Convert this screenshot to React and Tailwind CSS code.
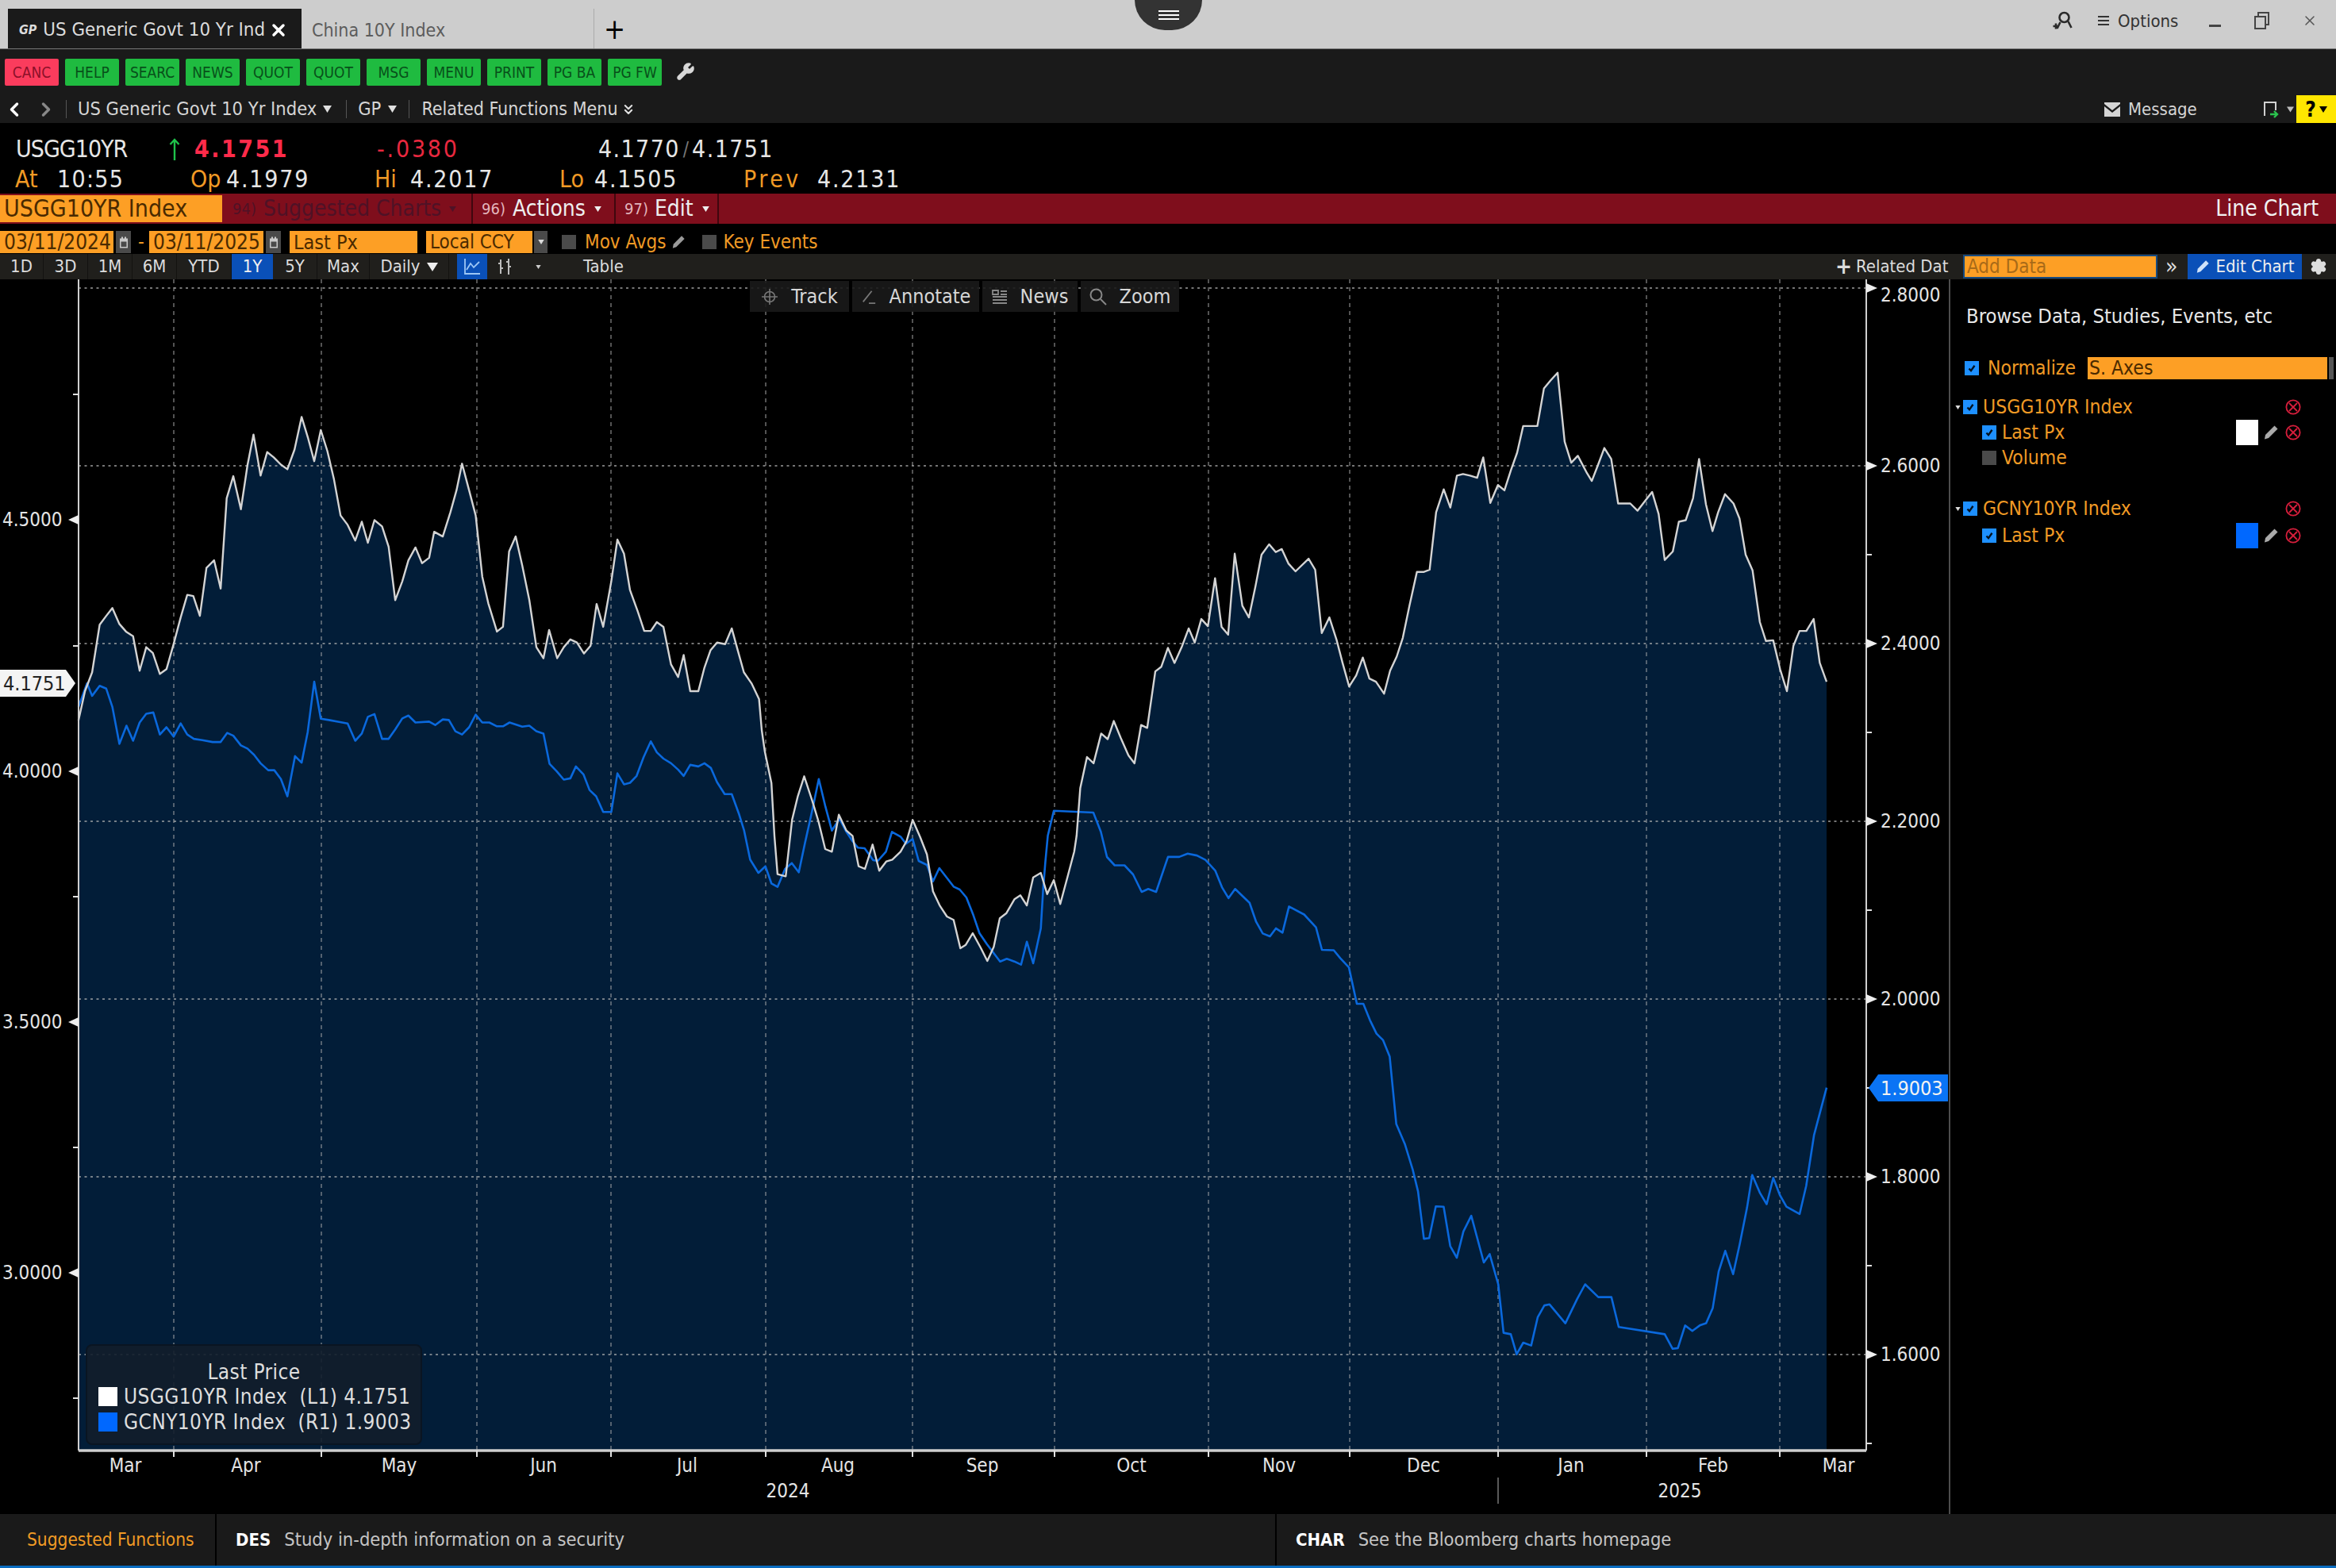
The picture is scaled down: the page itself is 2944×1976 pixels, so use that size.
import React from "react";
import { ChevronLeft, ChevronRight, ChevronsDown, Settings, Wrench, X } from "lucide-react";

// points were read off the zoomed crops, so each block keeps its own crop origin and scale
const crop = (pts, ox, oy, sx, sy) => pts.map(([x, y]) => [ox + x / sx, oy + y / sy]);

const white = [
  ...crop([[155,1183],[168,1090],[182,1030],[197,878],[210,850],[222,825],[236,876],[249,900],[263,915],[276,1025],[289,950],[302,968],[316,1035],[329,1020],[343,940],[357,855],[370,783],[382,787],[395,850],[408,697],[423,673],[436,763],[448,475],[461,405],[476,510],[489,370],[501,272],[515,403],[528,328],[541,345],[555,368],[568,383],[582,320],[596,216],[609,285],[621,357],[634,258],[647,325],[660,415],[673,530],[687,560],[702,610],[715,550],[727,617],[740,545],[755,565],[768,630],[781,800],[795,740],[807,673],[821,632],[834,682],[848,665],[858,582],[875,597],[890,520],[902,450],[913,365],[927,450],[940,530],[953,725],[965,810],[982,900],[994,885],[1006,645],[1019,597],[1032,690],[1046,800],[1060,950],[1074,985],[1085,895],[1101,985],[1114,950],[1127,925],[1140,935],[1154,970],[1167,945],[1179,812],[1192,885],[1208,740],[1220,607],[1233,652],[1245,768],[1260,835],[1273,898],[1286,898],[1298,870],[1311,885],[1326,1005],[1340,1045],[1351,975],[1364,1090],[1380,1090],[1392,1015],[1404,960],[1417,935],[1433,940],[1446,890],[1458,960],[1470,1030],[1485,1065],[1500,1115]], 0, 440, 1.568, 2.529),
  ...crop([[418,0],[428,80],[450,200],[460,400],[470,545],[497,553],[518,340],[537,250],[558,175],[585,270],[605,345],[627,450],[649,460],[672,320],[697,380],[717,400],[737,515],[758,525],[783,433],[805,532],[828,497],[848,490],[875,460],[895,420],[915,340],[940,405],[962,470],[982,610],[1005,665],[1028,705],[1050,718],[1072,825],[1090,812],[1113,768],[1140,825],[1161,873],[1182,820],[1202,712],[1224,692],[1250,640],[1270,625],[1291,663],[1312,557],[1337,540],[1358,620],[1380,567],[1401,658],[1425,555],[1447,460],[1455,400],[1467,220]], 800, 920, 2.613, 3),
  ...crop([[580,1300],[593,1320],[608,1225],[621,1243],[633,1185],[647,1240],[662,1295],[674,1320],[687,1198],[699,1207],[715,1027],[727,1012],[740,952],[753,1000],[767,950],[781,890],[793,935],[806,860],[819,883],[833,730],[846,885],[859,910],[872,652],[887,818],[900,855],[913,755],[925,655],[940,622],[953,647],[965,637],[978,683],[992,708],[1018,668],[1031,703],[1044,905],[1059,855],[1073,925],[1085,1000],[1098,1075],[1112,1040],[1125,983],[1138,1050],[1151,1060],[1167,1098],[1179,1025],[1192,980],[1204,920],[1217,820],[1232,710],[1246,710],[1257,703],[1270,520],[1285,447],[1298,505],[1311,403],[1323,398],[1337,403],[1351,410],[1363,345],[1377,490],[1392,433],[1405,450],[1418,385],[1430,330],[1442,245],[1470,245],[1483,125],[1496,100],[1510,75],[1524,295],[1537,362],[1550,340],[1568,395]], 1000, 440, 1.568, 2.529),
  ...crop([[600,420],[615,370],[631,315],[648,350],[665,492],[695,492],[713,515],[735,478],[749,455],[765,525],[780,672],[800,645],[815,550],[832,545],[850,475],[865,350],[882,495],[898,580],[912,520],[929,462],[950,492],[965,540],[980,655],[997,705],[1015,870],[1030,930],[1048,928],[1065,1020],[1082,1090],[1098,945],[1113,898],[1130,898],[1148,860],[1163,1000],[1180,1060]], 1700, 440, 1.96, 2.529),
];

const blue = [
  ...crop([[155,1140],[172,1065],[182,1105],[197,1073],[210,1082],[222,1140],[236,1258],[250,1200],[263,1248],[276,1190],[289,1162],[303,1158],[316,1228],[329,1205],[343,1235],[357,1193],[370,1228],[383,1242],[400,1246],[420,1252],[436,1252],[449,1223],[461,1232],[476,1263],[489,1273],[502,1293],[515,1320],[530,1342],[542,1342],[555,1370],[568,1425],[583,1297],[596,1318],[608,1220],[621,1060],[634,1178],[650,1182],[670,1188],[687,1193],[702,1248],[715,1225],[727,1172],[740,1163],[755,1242],[768,1242],[781,1212],[795,1177],[807,1168],[821,1190],[848,1187],[860,1198],[875,1180],[887,1182],[900,1218],[913,1228],[927,1205],[940,1165],[953,1190],[967,1190],[982,1202],[994,1202],[1007,1190],[1032,1203],[1046,1200],[1060,1218],[1074,1225],[1086,1322],[1100,1345],[1114,1372],[1127,1368],[1138,1330],[1153,1355],[1165,1405],[1178,1425],[1192,1475],[1208,1475],[1220,1352],[1233,1387],[1245,1382],[1258,1360],[1272,1300],[1286,1250],[1298,1285],[1311,1305],[1326,1320],[1340,1340],[1351,1360],[1364,1325],[1380,1330],[1392,1320],[1405,1335],[1417,1380],[1432,1418],[1446,1418],[1460,1480]], 0, 440, 1.568, 2.529),
  ...crop([[360,380],[380,490],[407,540],[430,515],[450,580],[470,593],[495,525],[517,503],[540,538],[560,430],[585,300],[606,185],[628,290],[649,380],[674,335],[697,385],[717,420],[735,445],[757,447],[785,492],[800,495],[827,460],[847,385],[875,403],[893,430],[915,412],[935,495],[962,510],[982,572],[1003,522],[1050,592],[1070,603],[1092,633],[1115,700],[1135,768],[1160,810],[1203,875],[1225,865],[1250,875],[1272,887],[1291,800],[1312,882],[1337,750],[1345,600],[1352,500],[1360,400],[1380,305],[1510,312],[1535,385],[1555,480]], 800, 920, 2.613, 3),
  ...crop([[247,110],[262,110],[275,135],[288,183],[298,175],[310,183],[328,87],[345,87],[358,78],[372,83],[385,95],[400,125],[410,170],[420,200],[430,175],[452,213],[462,265],[472,297],[483,305],[492,283],[502,295],[512,223],[535,245],[553,280],[562,342],[580,343],[590,365],[603,390],[615,490],[625,490],[635,535],[645,572],[655,590],[665,635],[675,820],[688,875],[700,945],[708,1005],[717,1135],[725,1133],[735,1046],[747,1047],[757,1155],[767,1187],[777,1115],[789,1072],[808,1200],[817,1177],[830,1260],[838,1393],[849,1397],[858,1452],[868,1420],[880,1428],[890,1350],[900,1318],[908,1315],[932,1367],[950,1300],[962,1260],[982,1295],[1002,1295],[1013,1377],[1083,1397],[1095,1437],[1103,1435],[1114,1373],[1125,1388],[1137,1372],[1146,1367],[1156,1325],[1165,1225],[1175,1168],[1187,1232],[1197,1150],[1208,1050],[1216,960],[1228,1010],[1238,1040],[1248,968],[1258,1015],[1268,1047],[1288,1067],[1298,990],[1310,850],[1329,720]], 1200, 1040, 1.206, 2.178),
];

const toPoints = (pts) => pts.map(([x, y]) => `${x.toFixed(1)},${y.toFixed(1)}`).join(" ");

const AXIS_L = 99;
const AXIS_R = 2352;
const AXIS_B = 1828;
const vGrid = [219, 405, 601, 770, 965, 1150, 1329, 1523, 1701, 1888, 2075, 2243];
const rightTicks = [
  ["2.8000", 363],
  ["2.6000", 587],
  ["2.4000", 811],
  ["2.2000", 1035],
  ["2.0000", 1259],
  ["1.8000", 1483],
  ["1.6000", 1707],
];
const rightMinor = [699, 923, 1147, 1371, 1595, 1819];
const leftTicks = [
  ["4.5000", 655],
  ["4.0000", 972],
  ["3.5000", 1288],
  ["3.0000", 1604],
];
const leftMinor = [497, 814, 1130, 1446, 1762];
const months = [
  ["Mar", 158],
  ["Apr", 310],
  ["May", 503],
  ["Jun", 685],
  ["Jul", 866],
  ["Aug", 1056],
  ["Sep", 1238],
  ["Oct", 1426],
  ["Nov", 1612],
  ["Dec", 1794],
  ["Jan", 1980],
  ["Feb", 2159],
  ["Mar", 2317],
];

const keys = ["HELP", "SEARC", "NEWS", "QUOT", "QUOT", "MSG", "MENU", "PRINT", "PG BA", "PG FW"];

const ranges = [
  ["1D", "w-[55px]"],
  ["3D", "w-[56px]"],
  ["1M", "w-[56px]"],
  ["6M", "w-[56px]"],
  ["YTD", "w-[69px]"],
];

const Caret = ({ className = "" }) => (
  <svg viewBox="0 0 10 8" className={className} fill="currentColor">
    <path d="M0 0h10L5 8z" />
  </svg>
);

const Check = ({ on = true, className = "" }) =>
  on ? (
    <span className={`flex h-[18px] w-[18px] shrink-0 items-center justify-center bg-[#1e90ff] ${className}`}>
      <svg viewBox="0 0 12 12" className="h-[12px] w-[12px]" fill="none" stroke="#04121f" strokeWidth="2.4">
        <path d="M2.5 6.5 5 9.2 9.5 2.8" />
      </svg>
    </span>
  ) : (
    <span className={`block h-[18px] w-[18px] shrink-0 bg-[#4a4a4a] ${className}`} />
  );

const Pencil = ({ className = "" }) => (
  <svg viewBox="0 0 20 20" className={className} fill="currentColor">
    <path d="M14.5 1.5 18.5 5.5 7 17 2 18.500 3 13z" />
  </svg>
);

const Remove = () => (
  <svg viewBox="0 0 20 20" className="h-[20px] w-[20px] shrink-0" fill="none" stroke="#d81e3c" strokeWidth="1.8">
    <circle cx="10" cy="10" r="8.6" />
    <path d="M5 5l10 10M15 5 5 15" />
  </svg>
);

const Calendar = () => (
  <span className="ml-[3px] flex h-[28px] w-[19px] items-center justify-center bg-[#4a4a4a]">
    <svg viewBox="0 0 12 14" className="h-[15px] w-[12px]" fill="#c9c9c9">
      <path d="M1 2h2V0h2v2h2V0h2v2h2v12H1zM2.500 6v6.500h7V6z" />
    </svg>
  </span>
);

const Field = ({ className, children }) => (
  <span className={`flex h-[28px] items-center bg-[#fd9f25] pl-[5px] leading-none text-[#4a2a00] ${className}`}>
    {children}
  </span>
);

const FloatTool = ({ icon, label, width, gap }) => (
  <div className={`flex h-full items-center justify-center bg-[#1a1a1a]/90 ${width} ${gap}`}>
    {icon}
    <span className="text-[25px] leading-none text-[#d7d7d7]">{label}</span>
  </div>
);

const Chart = () => (
  <svg viewBox={`0 352 2456 1556`} className="block h-[1556px] w-[2456px]">
    <polygon
      points={`${toPoints(white)} 2302,${AXIS_B} ${AXIS_L},${AXIS_B}`}
      fill="#021d38"
    />
    {vGrid.map((x) => (
      <line key={x} x1={x} x2={x} y1={352} y2={AXIS_B} stroke="#b4b4b4" strokeOpacity="0.58" strokeWidth="1.6" strokeDasharray="5 5" />
    ))}
    {rightTicks.map(([, y]) => (
      <line key={y} x1={AXIS_L} x2={AXIS_R} y1={y} y2={y} stroke="#b4b4b4" strokeOpacity="0.65" strokeWidth="1.8" strokeDasharray="3 4.500" />
    ))}
    <polyline points={toPoints(blue)} fill="none" stroke="#0a68dc" strokeWidth="2.6" strokeLinejoin="round" />
    <polyline points={toPoints(white)} fill="none" stroke="#d4d4d4" strokeWidth="2.4" strokeLinejoin="round" />

    <line x1={AXIS_L} x2={AXIS_L} y1={352} y2={AXIS_B} stroke="#cfcfcf" strokeWidth="2" />
    <line x1={AXIS_R} x2={AXIS_R} y1={352} y2={AXIS_B} stroke="#cfcfcf" strokeWidth="2" />
    <line x1={AXIS_L} x2={AXIS_R} y1={AXIS_B} y2={AXIS_B} stroke="#cfcfcf" strokeWidth="3.500" />

    {vGrid.map((x) => (
      <line key={x} x1={x} x2={x} y1={AXIS_B} y2={AXIS_B + 8} stroke="#e0e0e0" strokeWidth="2" />
    ))}
    {leftMinor.map((y) => (
      <line key={y} x1={AXIS_L - 7} x2={AXIS_L} y1={y} y2={y} stroke="#e0e0e0" strokeWidth="2" />
    ))}
    {rightMinor.map((y) => (
      <line key={y} x1={AXIS_R} x2={AXIS_R + 7} y1={y} y2={y} stroke="#e0e0e0" strokeWidth="2" />
    ))}

    <g fill="#e4e4e4" fontSize="24">
      {leftTicks.map(([label, y]) => (
        <g key={label}>
          <polygon points={`${AXIS_L},${y - 6} ${AXIS_L},${y + 6} ${AXIS_L - 13},${y}`} fill="#eeeeee" />
          <text x="3" y={y + 8}>{label}</text>
        </g>
      ))}
      {rightTicks.map(([label, y], i) => (
        <g key={label}>
          <polygon points={`${AXIS_R},${y - 6} ${AXIS_R},${y + 6} ${AXIS_R + 14},${y}`} fill="#eeeeee" />
          <text x="2370" y={(i === 0 ? 372 : y) + 8}>{label}</text>
        </g>
      ))}
      {months.map(([label, x], i) => (
        <text key={i} x={x} y="1855" textAnchor="middle">{label}</text>
      ))}
      <text x="993" y="1887" textAnchor="middle">2024</text>
      <text x="2117" y="1887" textAnchor="middle">2025</text>
    </g>
    <line x1="1888" x2="1888" y1="1862" y2="1895" stroke="#777" strokeWidth="1.500" />

    <polygon points="0,844 83,844 95,861 83,878 0,878" fill="#f4f4f4" />
    <text x="4" y="870" fontSize="25" fill="#222">4.1751</text>
    <polygon points="2367,1354 2455,1354 2455,1388 2367,1388 2355,1371" fill="#0a74f5" />
    <text x="2370" y="1380" fontSize="25" fill="#f2f2f2">1.9003</text>
  </svg>
);

const App = () => {
  return (
    <div className="relative flex h-[1976px] w-[2944px] flex-col overflow-hidden bg-black [font-family:'DejaVu_Sans_Condensed','DejaVu_Sans',sans-serif] text-[#e6e6e6]">
      {/* window title bar */}
      <div className="flex h-[62px] shrink-0 items-end border-b border-[#777] bg-[#cdcdcd]">
        <div className="ml-[10px] flex h-[50px] w-[370px] items-center bg-[#1a1a1a] pl-[14px] pt-[4px] text-[23.8px] leading-none text-[#dcdcdc]">
          <span className="mr-[8px] text-[16px] font-bold italic">GP</span>
          <span className="w-[285px] whitespace-nowrap">US Generic Govt 10 Yr Ind</span>
          <X className="h-[24px] w-[24px] text-white" strokeWidth={3.5} />
        </div>
        <div className="flex h-[50px] w-[369px] items-center border-r border-[#aaa] pl-[13px] pt-[4px] text-[23px] leading-none text-[#5c5c5c]">
          China 10Y Index
        </div>
        <div className="flex h-[50px] items-center pl-[12px] pt-[2px] text-[36px] leading-none text-black">+</div>
        <div className="ml-auto flex h-[50px] items-center pb-[20px] pr-[23px] text-[22px] text-[#333]">
          <svg viewBox="0 0 26 24" className="h-[24px] w-[27px]" fill="none" stroke="#2b2b2b" strokeWidth="2.600">
            <circle cx="14" cy="8" r="6" />
            <path d="M9 14l-4 8M19 13l4 8M0 19h7M3.500 15.500v7" />
          </svg>
          <span className="ml-[30px] mr-[11px] flex w-[14px] flex-col gap-[3px]">
            <span className="h-[2px] bg-[#333]" />
            <span className="h-[2px] bg-[#333]" />
            <span className="h-[2px] bg-[#333]" />
          </span>
          <span className="w-[115px]">Options</span>
          <span className="mt-[12px] h-[3px] w-[15px] bg-[#444]" />
          <svg viewBox="0 0 20 22" className="ml-[42px] h-[22px] w-[20px]" fill="none" stroke="#444" strokeWidth="2">
            <path d="M1 6h13v15H1zM5 6V1h13v15h-4" />
          </svg>
          <X className="ml-[40px] h-[20px] w-[20px] text-[#555]" strokeWidth={1.8} />
        </div>
      </div>

      {/* the little menu handle hanging from the top edge */}
      <div className="absolute left-[1430px] top-0 flex h-[38px] w-[85px] items-center justify-center rounded-b-full bg-[#333]">
        <span className="flex w-[26px] flex-col gap-[3px]">
          <span className="h-[2px] bg-white" />
          <span className="h-[2px] bg-white" />
          <span className="h-[2px] bg-white" />
        </span>
      </div>

      {/* function keys + security nav */}
      <div className="flex h-[93px] shrink-0 flex-col bg-[#1a1a1a]">
        <div className="flex h-[46px] items-end gap-[8px] pl-[6px]">
          <span className="flex h-[34px] w-[68px] items-center justify-center overflow-hidden rounded-[2px] bg-[#fb3c5d] text-[19px] leading-none whitespace-nowrap text-[#8c1029]">
            CANC
          </span>
          {keys.map((k, i) => (
            <span key={i} className="flex h-[34px] w-[68px] items-center justify-center overflow-hidden rounded-[2px] bg-[#1fbb40] text-[19px] leading-none whitespace-nowrap text-[#08501a]">
              {k}
            </span>
          ))}
          <Wrench className="mb-[6px] ml-[10px] h-[24px] w-[24px] text-[#d8d8d8]" fill="#d8d8d8" strokeWidth={1.5} />
        </div>
        <div className="flex h-[47px] items-center pt-[12px] text-[23.5px] leading-none text-[#d5d5d5]">
          <ChevronLeft className="ml-[4px] h-[28px] w-[28px] text-white" strokeWidth={3} />
          <ChevronRight className="ml-[12px] h-[28px] w-[28px] text-[#888]" strokeWidth={3} />
          <span className="ml-[11px] h-[23px] border-l border-[#555]" />
          <span className="ml-[14px]">US Generic Govt 10 Yr Index</span>
          <Caret className="ml-[8px] h-[9px] w-[11px] text-[#e0e0e0]" />
          <span className="ml-[18px] h-[23px] border-l border-[#555]" />
          <span className="ml-[14px]">GP</span>
          <Caret className="ml-[9px] h-[9px] w-[11px] text-[#e0e0e0]" />
          <span className="ml-[15px] h-[23px] border-l border-[#555]" />
          <span className="ml-[15px] text-[23px]">Related Functions Menu</span>
          <ChevronsDown className="ml-[3px] h-[20px] w-[20px] text-[#e0e0e0]" strokeWidth={2.5} />
          <div className="ml-auto flex h-full items-center">
            <svg viewBox="0 0 20 20" className="h-[20px] w-[20px]" fill="#d5d5d5">
              <path d="M0 1h20v2L10 11 0 3zM0 6l10 8 10-8v13H0z" />
            </svg>
            <span className="ml-[10px] w-[170px] text-[22px]">Message</span>
            <svg viewBox="0 0 20 22" className="h-[22px] w-[20px]" fill="none">
              <path d="M2 19V2h14v10" stroke="#d0d0d0" strokeWidth="2" />
              <path d="M9 17h8M14 13l4 4-4 4" stroke="#2bc24e" strokeWidth="2.400" />
            </svg>
            <Caret className="ml-[10px] h-[8px] w-[9px] text-[#bbb]" />
            <span className="ml-[3px] flex h-[35px] w-[50px] items-center justify-center gap-[4px] self-end bg-[#ffe600] text-[26px] font-bold text-black">
              ?<Caret className="h-[8px] w-[10px] text-black" />
            </span>
          </div>
        </div>
      </div>

      {/* quote lines */}
      <div className="h-[89px] shrink-0 pt-[14px] text-[30px] leading-none">
        <div className="flex h-[38px] items-center pl-[20px]">
          <span className="w-[193px] tracking-[-1px]">USGG10YR</span>
          <svg viewBox="0 0 14 28" className="h-[28px] w-[14px] shrink-0" fill="none" stroke="#1fc24a" strokeWidth="2.400">
            <path d="M7 28V2M1.500 8 7 2l5.500 6" />
          </svg>
          <span className="ml-[18px] w-[230px] font-bold tracking-[2.5px] text-[#ff2b4a]">4.1751</span>
          <span className="w-[279px] tracking-[2.8px] text-[#e8283f]">-.0380</span>
          <span className="tracking-[1.4px]">4.1770</span>
          <span className="mx-[4px] text-[24px] text-[#777]">/</span>
          <span className="tracking-[1.4px]">4.1751</span>
        </div>
        <div className="flex h-[37px] items-center pl-[19px]">
          <span className="w-[53px] text-[#f09a25]">At</span>
          <span className="w-[168px] tracking-[1.3px]">10:55</span>
          <span className="w-[45px] text-[#f09a25]">Op</span>
          <span className="w-[187px] tracking-[1.8px]">4.1979</span>
          <span className="w-[45px] text-[#f09a25]">Hi</span>
          <span className="w-[188px] tracking-[1.8px]">4.2017</span>
          <span className="w-[44px] text-[#f09a25]">Lo</span>
          <span className="w-[188px] tracking-[1.8px]">4.1505</span>
          <span className="w-[93px] tracking-[3.5px] text-[#f09a25]">Prev</span>
          <span className="tracking-[1.8px]">4.2131</span>
        </div>
      </div>

      {/* red function bar */}
      <div className="flex h-[38px] shrink-0 bg-[#7f0e1c] text-[28px] leading-none">
        <span className="my-[2px] flex w-[280px] items-center bg-[#fd9f25] pl-[5px] text-[30px] text-[#4a2a00]">USGG10YR Index</span>
        <div className="ml-[2px] flex w-[310px] items-center pl-[11px] text-[#4f1226]">
          <span className="mr-[9px] text-[20px]">94)</span>
          Suggested Charts
          <Caret className="ml-[10px] h-[7px] w-[9px]" />
        </div>
        <div className="ml-[2px] flex w-[177px] items-center border-l-2 border-black/50 pl-[11px] text-[#eee]">
          <span className="mr-[9px] text-[20px] text-[#e3b6bd]">96)</span>
          Actions
          <Caret className="ml-[11px] h-[7px] w-[9px]" />
        </div>
        <div className="ml-[3px] flex w-[132px] items-center border-l-2 border-r-2 border-black/50 pl-[11px] text-[#eee]">
          <span className="mr-[8px] text-[20px] text-[#e3b6bd]">97)</span>
          Edit
          <Caret className="ml-[11px] h-[7px] w-[9px]" />
        </div>
        <span className="ml-auto self-center pr-[22px] text-[#f0f0f0]">Line Chart</span>
      </div>

      {/* date / price source row */}
      <div className="flex h-[38px] shrink-0 items-center pt-[8px] text-[24px] leading-none text-[#f09a25]">
        <Field className="w-[143px] text-[26px]">03/11/2024</Field>
        <Calendar />
        <span className="ml-[9px] w-[14px]">-</span>
        <Field className="w-[144px] text-[26px]">03/11/2025</Field>
        <Calendar />
        <Field className="ml-[11px] w-[161px] text-[25px]">Last Px</Field>
        <Field className="ml-[11px] w-[134px] text-[24px]">Local CCY</Field>
        <span className="ml-[2px] flex h-[28px] w-[17px] items-center justify-center bg-[#4a4a4a]">
          <Caret className="h-[6px] w-[8px] text-[#ddd]" />
        </span>
        <Check on={false} className="ml-[18px]" />
        <span className="ml-[11px]">Mov Avgs</span>
        <Pencil className="ml-[6px] h-[18px] w-[18px] text-[#9a9a9a]" />
        <Check on={false} className="ml-[21px]" />
        <span className="ml-[9px]">Key Events</span>
      </div>

      {/* range toolbar */}
      <div className="flex h-[32px] shrink-0 items-center bg-[#201f1c] text-[22px] leading-none text-[#dcdcdc]">
        {ranges.map(([r, w]) => (
          <span key={r} className={`flex h-full items-center justify-center border-r border-black/40 ${w}`}>{r}</span>
        ))}
        <span className="flex h-full w-[52px] items-center justify-center bg-[#0a50b8] text-[#f0f0f0]">1Y</span>
        <span className="flex h-full w-[56px] items-center justify-center border-r border-black/40">5Y</span>
        <span className="flex h-full w-[66px] items-center justify-center border-r border-black/40">Max</span>
        <span className="flex h-full w-[100px] items-center justify-center gap-[8px] border-r border-black/40">
          Daily
          <Caret className="h-[13px] w-[14px] text-[#eee]" />
        </span>
        <span className="ml-[10px] flex h-full w-[38px] items-center justify-center bg-[#0a50b8]">
          <svg viewBox="0 0 22 22" className="h-[22px] w-[24px]" fill="none" stroke="#9cc6f5" strokeWidth="1.800">
            <path d="M2 1v19h19M4 15l5-8 4 5 7-7" />
          </svg>
        </span>
        <svg viewBox="0 0 22 22" className="ml-[10px] h-[22px] w-[24px]" fill="none" stroke="#bdbdbd" strokeWidth="2">
          <path d="M6 2v18M3 7h3M6 13h3M16 1v20M13 5h3M16 11h3" />
        </svg>
        <Caret className="ml-[27px] h-[5px] w-[7px] text-[#ccc]" />
        <span className="ml-[53px] w-[56px]">Table</span>
        <span className="ml-[1522px] w-[21px] text-[28px] leading-none font-bold">+</span>
        <span className="ml-[5px] w-[119px] whitespace-nowrap">Related Dat</span>
        <span className="ml-[16px] flex h-[30px] w-[245px] items-center border-2 border-[#164a80] bg-[#fd9f25] pl-[3px] text-[24px] text-[#a86a18]">
          Add Data
        </span>
        <span className="ml-[10px] w-[28px] text-[28px] leading-none">»</span>
        <span className="flex h-full w-[144px] items-center justify-center gap-[8px] bg-[#0a50b8] text-[#eee]">
          <Pencil className="h-[18px] w-[18px] text-[#cfe2fa]" />
          Edit Chart
        </span>
        <Settings className="ml-[10px] h-[22px] w-[22px] text-[#ddd]" fill="#ddd" strokeWidth={2} />
      </div>

      {/* chart + side panel */}
      <div className="flex h-[1556px] shrink-0">
        <div className="relative h-full w-[2456px] shrink-0">
          <Chart />

          <div className="absolute left-[945px] top-[2px] flex h-[39px] gap-[4px]">
            <FloatTool
              width="w-[125px]"
              gap="gap-[16px]"
              label="Track"
              icon={
                <svg viewBox="0 0 22 22" className="h-[22px] w-[22px]" fill="none" stroke="#777" strokeWidth="1.600">
                  <circle cx="11" cy="11" r="6.500" />
                  <path d="M11 1v20M1 11h20" />
                </svg>
              }
            />
            <FloatTool
              width="w-[160px]"
              gap="gap-[16px]"
              label="Annotate"
              icon={
                <svg viewBox="0 0 22 22" className="h-[20px] w-[20px]" fill="none" stroke="#777" strokeWidth="2">
                  <path d="M3 18 15 3M11 20h9" />
                </svg>
              }
            />
            <FloatTool
              width="w-[120px]"
              gap="gap-[16px]"
              label="News"
              icon={
                <svg viewBox="0 0 20 20" className="h-[20px] w-[20px]" fill="none" stroke="#888" strokeWidth="1.800">
                  <path d="M1 2h7v5H1zM11 3h8M11 7h8M1 10h18M1 14h18M1 18h18" />
                </svg>
              }
            />
            <FloatTool
              width="w-[124px]"
              gap="gap-[16px]"
              label="Zoom"
              icon={
                <svg viewBox="0 0 22 22" className="h-[22px] w-[22px]" fill="none" stroke="#888" strokeWidth="2">
                  <circle cx="8.500" cy="8.500" r="7" />
                  <path d="m14 14 7 7" />
                </svg>
              }
            />
          </div>

          <div className="absolute left-[108px] top-[1342px] flex h-[127px] w-[424px] flex-col rounded-[8px] border-2 border-[#0a1522] bg-[#121e2b]/90 pl-[14px] text-[26px] leading-none tracking-[0.4px] text-[#dedede]">
            <div className="mt-[18px] flex h-[30px] items-center justify-center pr-[14px]">Last Price</div>
            <div className="flex h-[32px] items-center gap-[8px]">
              <span className="h-[24px] w-[24px] bg-white" />
              <span className="whitespace-pre">USGG10YR Index  (L1) 4.1751</span>
            </div>
            <div className="flex h-[32px] items-center gap-[8px]">
              <span className="h-[24px] w-[24px] bg-[#0068ff]" />
              <span className="whitespace-pre">GCNY10YR Index  (R1) 1.9003</span>
            </div>
          </div>
        </div>

        <div className="flex-1 border-l-2 border-[#4d4d4d] pt-[33px] text-[24.5px] leading-none text-[#f09a25]">
          <div className="flex h-[28px] items-center pl-[20px] text-[25.4px] text-[#e8e8e8]">Browse Data, Studies, Events, etc</div>

          <div className="mt-[37px] flex h-[28px] items-center pl-[18px]">
            <Check />
            <span className="ml-[11px] w-[126px]">Normalize</span>
            <span className="flex h-[28px] w-[302px] items-center bg-[#fd9f25] pl-[2px] text-[#4a2a00]">S. Axes</span>
            <span className="ml-[2px] h-[28px] w-[6px] bg-[#555]" />
          </div>

          <div className="mt-[23px] flex h-[24px] items-center pl-[2px] pr-[44px]">
            <span className="flex w-[14px] justify-center"><Caret className="h-[5px] w-[7px] text-[#ddd]" /></span>
            <Check />
            <span className="ml-[7px]">USGG10YR Index</span>
            <span className="ml-auto"><Remove /></span>
          </div>
          <div className="mt-[8px] flex h-[24px] items-center pl-[40px] pr-[44px]">
            <Check />
            <span className="ml-[7px]">Last Px</span>
            <span className="ml-auto h-[32px] w-[28px] bg-white" />
            <Pencil className="ml-[6px] h-[20px] w-[20px] text-[#aaa]" />
            <span className="ml-[8px]"><Remove /></span>
          </div>
          <div className="mt-[8px] flex h-[24px] items-center pl-[40px]">
            <Check on={false} />
            <span className="ml-[7px]">Volume</span>
          </div>

          <div className="mt-[40px] flex h-[24px] items-center pl-[2px] pr-[44px]">
            <span className="flex w-[14px] justify-center"><Caret className="h-[5px] w-[7px] text-[#ddd]" /></span>
            <Check />
            <span className="ml-[7px]">GCNY10YR Index</span>
            <span className="ml-auto"><Remove /></span>
          </div>
          <div className="mt-[10px] flex h-[24px] items-center pl-[40px] pr-[44px]">
            <Check />
            <span className="ml-[7px]">Last Px</span>
            <span className="ml-auto h-[32px] w-[28px] bg-[#0068ff]" />
            <Pencil className="ml-[6px] h-[20px] w-[20px] text-[#aaa]" />
            <span className="ml-[8px]"><Remove /></span>
          </div>
        </div>
      </div>

      {/* suggested functions */}
      <div className="flex h-[65px] shrink-0 items-center bg-[#1a1a1a] text-[23.5px] leading-none">
        <div className="flex h-full w-[271px] items-center pl-[34px] text-[22.5px] text-[#f09a25]">Suggested Functions</div>
        <div className="flex h-full w-[1336px] items-center border-l-2 border-black pl-[24px]">
          <span className="text-[22px] font-bold text-white">DES</span>
          <span className="ml-[17px] text-[#c4c4c4]">Study in-depth information on a security</span>
        </div>
        <div className="flex h-full flex-1 items-center border-l-2 border-black pl-[24px]">
          <span className="text-[22px] font-bold text-white">CHAR</span>
          <span className="ml-[17px] text-[#c4c4c4]">See the Bloomberg charts homepage</span>
        </div>
      </div>
      <div className="h-[3px] shrink-0 bg-[#0a6cc0]" />
    </div>
  );
};

export default App;
